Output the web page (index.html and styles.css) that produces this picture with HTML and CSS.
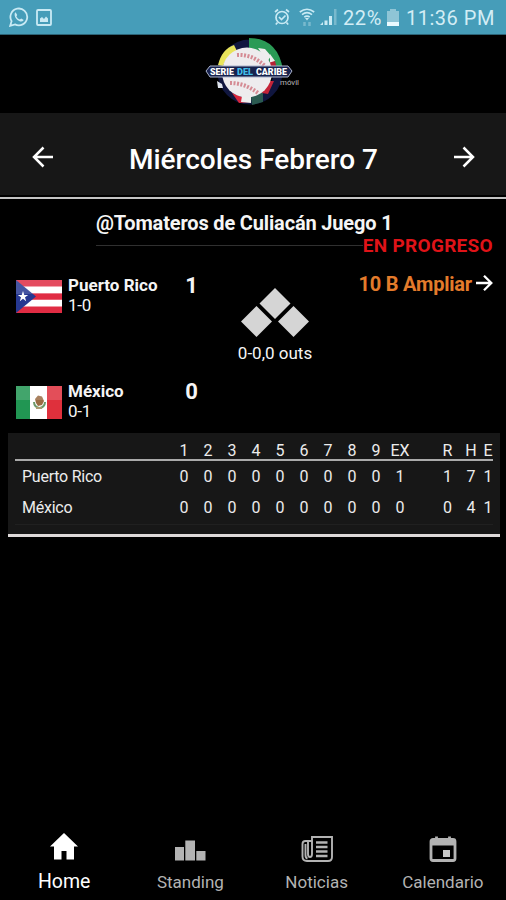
FILE: index.html
```html
<!DOCTYPE html>
<html lang="es">
<head>
    <meta charset="UTF-8">
    <title>Serie del Caribe Móvil</title>
    <link rel="stylesheet" href="styles.css">
</head>
<body>

    <!-- Status bar -->
    <div class="status-bar">
        <svg class="whatsapp" width="20" height="20" viewBox="0 0 20 20" fill="none" stroke="#c9eaf4" stroke-width="1.8">
            <path d="M1.2 18.8 L2.6 14.2 A8.4 8.4 0 1 1 6 17.4 Z"/>
            <path d="M6.6 5.2 L8.2 8 L7.4 9.4 Q8.6 11.6 10.8 12.6 L12.2 11.6 L14.8 13 Q13 15.4 10.2 14 Q6.2 12 5.6 8 Q5.4 6 6.6 5.2 Z" fill="#c9eaf4" stroke="none"/>
        </svg>
        <svg width="16" height="17" viewBox="0 0 16 17" fill="none" stroke="#c9eaf4" stroke-width="1.8">
            <rect x="1" y="1" width="14" height="15" rx="1"/>
            <path d="M4 13 V9.5 L6 8 L8 10 L10 7.5 L12 9.5 V13 Z" fill="#c9eaf4" stroke="none"/>
        </svg>
        <div class="status-right">
            <svg width="16" height="18" viewBox="0 0 16 18" fill="none" stroke="#c9eaf4" stroke-width="1.7">
                <circle cx="8" cy="9.5" r="6"/>
                <path d="M5 9 L7.5 11.5 L11.5 7.5 M1 4 L4 1.5 M15 4 L12 1.5 M3.5 14.5 L1.8 16.5 M12.5 14.5 L14.2 16.5"/>
            </svg>
            <svg class="wifi" width="16" height="18" viewBox="0 0 16 18" fill="none" stroke="#c9eaf4" stroke-width="1.6">
                <path d="M.8 4 Q8 -1.6 15.2 4 M3 6.6 Q8 2.6 13 6.6 M5.3 9.2 Q8 7 10.7 9.2"/>
                <path d="M6 10 H10 L8 12.5 Z" fill="#c9eaf4" stroke="none"/>
                <path d="M5.5 14 V18 M10.5 14 V18" stroke="#78b9cd" stroke-width="2.5"/>
            </svg>
            <svg class="signal" width="17" height="18" viewBox="0 0 17 18" fill="#c9eaf4">
                <path d="M0 17 L3 14 V17 Z M4.5 12.5 H7.5 V17 H4.5 Z M9 8 H12 V17 H9 Z"/>
                <path d="M14 1 H16.5 V17 H14 Z" fill="#78b9cd"/>
            </svg>
            <span class="percent">22%</span>
            <svg class="battery" width="12" height="17" viewBox="0 0 12 17">
                <path d="M3 0 H9 V2 H12 V17 H0 V2 H3 Z" fill="#8fc5d6"/>
                <rect y="13" width="12" height="4" fill="#eafaff"/>
            </svg>
            <span class="clock">11:36 PM</span>
        </div>
    </div>

    <!-- Logo -->
    <div class="logo">
        <svg width="100" height="72" viewBox="0 0 100 72">
            <circle cx="45" cy="36" r="28" fill="none" stroke="#10163f" stroke-width="9"/>
            <path d="M13 29 Q17 13 29 9 L32 15 Q21 20 18 30 Z" fill="#e8e45a"/>
            <path d="M44 2 Q73 2 78 34 L67 35 Q65 16 44 12 Z" fill="#2a9a55"/>
            <path d="M53 12 L60 13 L66 20 L62 26 Z M65 18 L70 25 L65 29 Z" fill="#eee"/>
            <path d="M63 27 L70 25 L72 33 L65 35 Z" fill="#b62235"/>
            <path d="M27 57 L37 61 L46 66 L34 67 Z" fill="#d7263d"/>
            <path d="M37 60 H46 V67 L36 66 Z" fill="#eee"/>
            <path d="M46 61 L58 56 V66 L47 69 Z" fill="#2b5a50"/>
            <path d="M61 45 H69 L63 58 L57 57 Z" fill="#c42338"/>
            <path d="M12 45 L17 48 L18 52 L13 52 Z" fill="#dfe4ee"/>
            <circle cx="42" cy="36.500" r="25" fill="#eeecee"/>
            <path d="M32 19 Q47 18 60 30 M25 47 Q40 47 53 57" fill="none" stroke="#d58b94" stroke-width="4" stroke-dasharray="2 1.5"/>
            <path d="M1 35 L5 30 H83 L87 35 L83 41 H5 Z" fill="#18224d" stroke="#aab3cb" stroke-width="1"/>
            <g font-family="Roboto, sans-serif" font-weight="900" font-size="9">
                <text x="5" y="38.700" fill="#fff" textLength="24" lengthAdjust="spacingAndGlyphs">SERIE</text>
                <text x="32" y="38.700" fill="#42bce8" textLength="16" lengthAdjust="spacingAndGlyphs">DEL</text>
                <text x="51" y="38.700" fill="#fff" textLength="31" lengthAdjust="spacingAndGlyphs">CARIBE</text>
            </g>
            <text x="75" y="48.500" fill="#bbb" font-family="Roboto, sans-serif" font-size="8" textLength="19" lengthAdjust="spacingAndGlyphs">móvil</text>
        </svg>
    </div>

    <!-- Date navigation -->
    <div class="date-bar">
        <svg width="22" height="22" viewBox="0 0 22 22" fill="none" stroke="#fff" stroke-width="2.5">
            <path d="M21 11 H2 M11.500 1.500 L2 11 L11.500 20.500"/>
        </svg>
        <h1>Miércoles Febrero 7</h1>
        <svg width="22" height="22" viewBox="0 0 22 22" fill="none" stroke="#fff" stroke-width="2.5">
            <path d="M1 11 H20 M10.500 1.500 L20 11 L10.500 20.500"/>
        </svg>
    </div>

    <!-- Game -->
    <div class="game">
        <h2>@Tomateros de Culiacán Juego 1</h2>
        <div class="progress">
            <div class="divider"></div>
            <span>EN PROGRESO</span>
        </div>

        <div class="match">
            <div class="teams">
                <div class="team">
                    <svg class="flag" width="46" height="33" viewBox="0 0 46 33">
                        <rect width="46" height="33" fill="#e02c43"/>
                        <path d="M0 6.6 H46 V13.2 H0 Z M0 19.8 H46 V26.4 H0 Z" fill="#fff"/>
                        <path d="M0 0 L20 16.5 L0 33 Z" fill="#263891"/>
                        <path d="M7 11 L8.3 15 H12.2 L9 17.3 L10.2 21.2 L7 18.8 L3.8 21.2 L5 17.3 L1.8 15 H5.7 Z" fill="#fff"/>
                        <rect width="46" height="14" fill="#fff" opacity=".15"/>
                    </svg>
                    <div class="team-info">
                        <strong>Puerto Rico</strong>
                        <span>1-0</span>
                    </div>
                    <div class="runs">1</div>
                </div>
                <div class="team">
                    <svg class="flag" width="46" height="33" viewBox="0 0 46 33">
                        <rect width="46" height="33" fill="#fff"/>
                        <rect width="14" height="33" fill="#219653"/>
                        <rect x="31" width="15" height="33" fill="#df303c"/>
                        <path d="M18 16 A5.500 6 0 0 0 29 16" fill="none" stroke="#6c9868" stroke-width="2"/>
                        <path d="M19 13 L22 9.500 L26 10.500 L28 15 L26 19 L22 20 L20 17 Z" fill="#9a6c43"/>
                        <path d="M20 22 H26" stroke="#a99c70" stroke-width="2"/>
                        <rect width="46" height="14" fill="#fff" opacity=".15"/>
                    </svg>
                    <div class="team-info">
                        <strong>México</strong>
                        <span>0-1</span>
                    </div>
                    <div class="runs">0</div>
                </div>
            </div>
            <div class="bases">
                <svg width="70" height="52" viewBox="0 0 70 52" fill="#d5d5d5">
                    <path d="M35 1 L50.500 16.500 L35 32 L19.500 16.500 Z"/>
                    <path d="M16.500 19 L32 34.500 L16.500 50 L1 34.500 Z"/>
                    <path d="M53.500 19 L69 34.500 L53.500 50 L38 34.500 Z"/>
                </svg>
                <span>0-0,0 outs</span>
            </div>
            <div class="expand">
                <span>10 B Ampliar</span>
                <svg width="17" height="17" viewBox="0 0 17 17" fill="none" stroke="#fff" stroke-width="2.3">
                    <path d="M0 8 H15 M8 .8 L15.300 8 L8 15.200"/>
                </svg>
            </div>
        </div>
    </div>

    <!-- Line score -->
    <div class="line-score">
        <div class="row head">
            <span></span>
            <span>1</span><span>2</span><span>3</span><span>4</span><span>5</span><span>6</span><span>7</span><span>8</span><span>9</span><span>EX</span>
            <span></span>
            <span>R</span><span>H</span><span>E</span>
        </div>
        <div class="row">
            <span class="name">Puerto Rico</span>
            <span>0</span><span>0</span><span>0</span><span>0</span><span>0</span><span>0</span><span>0</span><span>0</span><span>0</span><span>1</span>
            <span></span>
            <span>1</span><span>7</span><span>1</span>
        </div>
        <div class="row last">
            <span class="name">México</span>
            <span>0</span><span>0</span><span>0</span><span>0</span><span>0</span><span>0</span><span>0</span><span>0</span><span>0</span><span>0</span>
            <span></span>
            <span>0</span><span>4</span><span>1</span>
        </div>
    </div>

    <!-- Bottom tabs -->
    <div class="tabs">
        <div class="tab active">
            <svg width="30" height="30" viewBox="0 0 30 30" fill="#fff">
                <path d="M15 1 L29 14.500 H25 V27.500 H17.500 V19 H12.500 V27.500 H5 V14.500 H1 Z"/>
            </svg>
            <span>Home</span>
        </div>
        <div class="tab">
            <svg width="32" height="30" viewBox="0 0 32 30" fill="#b3b3b3">
                <path d="M1 15 H10 V28.500 H1 Z M11.300 8.500 H21 V28.500 H11.300 Z M22.300 19 H31.500 V28.500 H22.300 Z"/>
            </svg>
            <span>Standing</span>
        </div>
        <div class="tab">
            <svg width="32" height="30" viewBox="0 0 32 30" fill="none" stroke="#b3b3b3" stroke-width="1.900">
                <path d="M11 5 H31 V25 Q31 29 27 29 H6 Q1.500 29 1.500 24.500 V12 Q1.500 9 4.500 9 H7 V22 Q7 25 9 25 Q11 25 11 22 Z"/>
                <path d="M11 9 H7 M4.500 12 V23 Q4.500 26 6.500 26.500"/>
                <path d="M15 10.500 H26.500 M15 15 H26.500 M15 19.500 H26.500 M15 24 H26.500" stroke-width="2.400"/>
            </svg>
            <span>Noticias</span>
        </div>
        <div class="tab">
            <svg width="28" height="30" viewBox="0 0 28 30" fill="none" stroke="#b3b3b3" stroke-width="2.800">
                <rect x="2" y="7.500" width="24" height="21" rx="2"/>
                <path d="M2 10.500 H26" stroke-width="6"/>
                <path d="M7.500 4.500 V9 M20.500 4.500 V9"/>
                <rect x="14" y="18" width="7" height="7" fill="#c8c8c8" stroke="none"/>
            </svg>
            <span>Calendario</span>
        </div>
    </div>

</body>
</html>
```
FILE: styles.css
```css
/* General Styling */
* {
    box-sizing: border-box;
}

body {
    margin: 0;
    height: 900px;
    display: flex;
    flex-direction: column;
    font-family: Roboto, sans-serif;
    background: #000;
    color: #f5f5f5;
    overflow: hidden;
}

svg {
    display: block;
    flex: none;
}

span, strong, h1, h2 {
    white-space: nowrap;
}

/* Status bar */
.status-bar {
    height: 35px;
    padding: 0 10px 0 9px;
    display: flex;
    align-items: center;
    gap: 7px;
    background: #469db9;
    border-bottom: 1px solid #2c6376;
    color: #d3edf5;
    font-size: 20px;
}

.status-right {
    margin-left: auto;
    display: flex;
    align-items: center;
}

.status-right span {
    padding-top: 2px;
}

.wifi {
    margin-left: 9px;
}

.signal {
    margin-left: 5px;
}

.percent {
    width: 40px;
    margin-left: 6px;
    letter-spacing: 0.6px;
}

.battery {
    margin: 0 7px 0 4px;
}

.clock {
    width: 90px;
    letter-spacing: 0.5px;
}

/* Logo */
.logo {
    height: 78px;
    padding: 1px 0 0 205px;
}

/* Date bar */
.date-bar {
    height: 86px;
    padding: 3px 31px 0 32px;
    display: flex;
    align-items: center;
    justify-content: space-between;
    background: linear-gradient(#171717 82px, #000 82px);
    border-bottom: 2px solid #c4c4c4;
}

.date-bar h1 {
    margin: 6px 0 0;
    font-size: 28px;
    font-weight: 500;
    line-height: 32px;
    color: #fff;
}

/* Game */
.game {
    height: 234px;
    padding: 12px 13px 0 16px;
}

.game h2 {
    margin: 0 0 0 80px;
    font-size: 20px;
    font-weight: 700;
    line-height: 24px;
    letter-spacing: -0.16px;
}

.progress {
    height: 20px;
    margin-left: 80px;
    display: flex;
    align-items: center;
    color: #df1318;
    font-size: 19px;
    font-weight: 700;
    letter-spacing: 0.3px;
}

.divider {
    flex: 1;
    height: 1px;
    background: #303030;
}

.match {
    padding-top: 20px;
    display: grid;
    grid-template-columns: 223px 72px 1fr;
}

.team {
    height: 105.5px;
    display: flex;
    align-items: flex-start;
}

.flag {
    margin-top: 5px;
}

.team-info {
    width: 107px;
    padding-left: 6px;
    display: flex;
    flex-direction: column;
    font-size: 17px;
    line-height: 20px;
}

.team-info span {
    letter-spacing: -0.2px;
}

.runs {
    width: 45px;
    text-align: center;
    font-size: 22px;
    font-weight: 700;
    line-height: 21px;
}

.bases {
    padding-top: 12px;
    display: flex;
    flex-direction: column;
    align-items: center;
    gap: 4px;
    font-size: 17px;
    line-height: 20px;
}

.expand {
    display: flex;
    align-items: flex-start;
    justify-content: flex-end;
    gap: 4px;
    color: #e47b2b;
    font-size: 20px;
    font-weight: 700;
    line-height: 18px;
    letter-spacing: -0.2px;
}

/* Line score */
.line-score {
    height: 104px;
    margin: 0 6px 0 8px;
    padding: 6px 7px 0;
    background: #171717;
    border-bottom: 3px solid #dedada;
}

.row {
    height: 31px;
    padding-left: 7px;
    display: grid;
    grid-template-columns: 150px repeat(10, 24px) 23.5px 24px 23px 11px;
    justify-items: center;
    align-items: center;
    font-size: 16px;
    line-height: 20px;
    color: #ececec;
}

.head {
    height: 22px;
    padding-top: 2px;
    border-bottom: 2px solid #aaa;
}

.name {
    justify-self: start;
    letter-spacing: -0.25px;
}

.last {
    height: 33px;
    border-bottom: 1px solid #202020;
}

/* Bottom tabs */
.tabs {
    height: 68px;
    margin-top: auto;
    padding-left: 1px;
    display: grid;
    grid-template-columns: repeat(4, 1fr);
}

.tab {
    display: flex;
    flex-direction: column;
    align-items: center;
    gap: 9px;
    color: #b3b3b3;
    font-size: 17px;
    line-height: 22px;
}

.tab.active {
    color: #fff;
    font-size: 19.5px;
}
```
